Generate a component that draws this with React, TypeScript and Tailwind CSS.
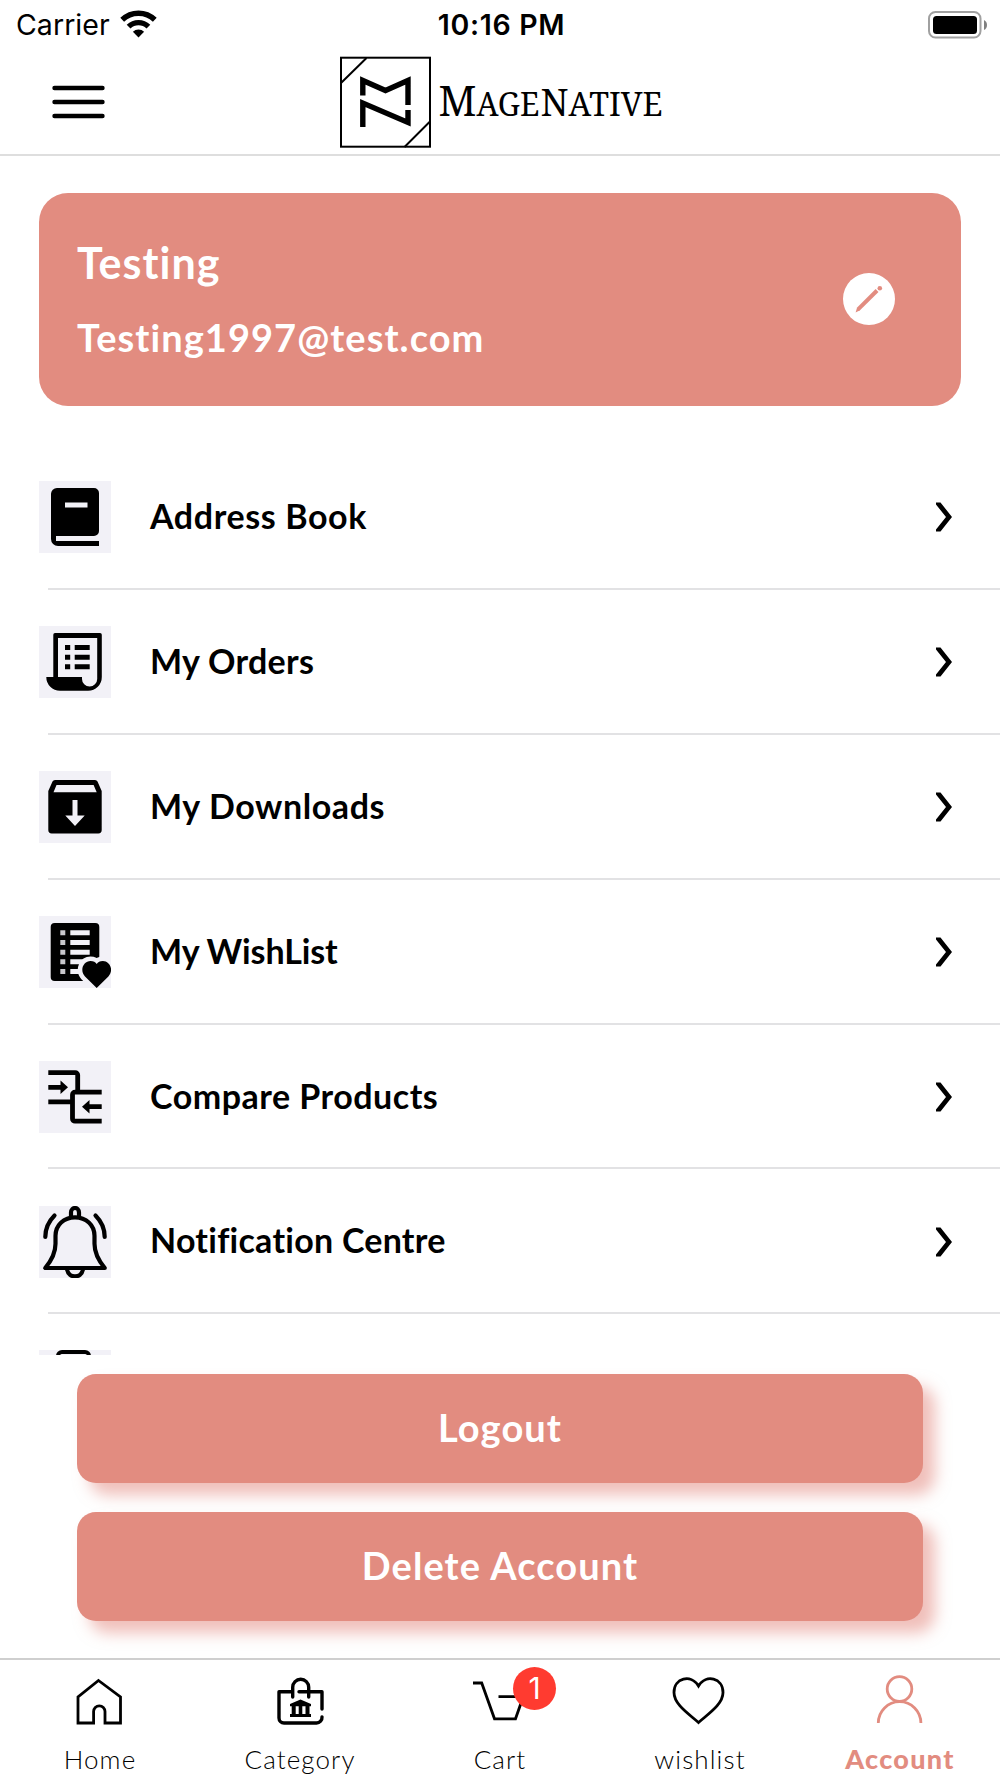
import type { ReactNode } from "react"

const menuItems = [
  { label: "Address Book", icon: BookIcon, tracking: "tracking-[0.6px]" },
  { label: "My Orders", icon: OrdersIcon, tracking: "tracking-[0.3px]" },
  { label: "My Downloads", icon: DownloadsIcon, tracking: "tracking-[0.6px]" },
  { label: "My WishList", icon: WishListIcon, tracking: "tracking-[-0.1px]" },
  { label: "Compare Products", icon: CompareIcon, tracking: "tracking-[0.5px]" },
  { label: "Notification Centre", icon: BellIcon, tracking: "tracking-[0.25px]" }
]

const tabs = [
  { label: "Home", icon: HomeIcon },
  { label: "Category", icon: CategoryIcon },
  { label: "Cart", icon: CartIcon, badge: 1 },
  { label: "wishlist", icon: HeartIcon },
  { label: "Account", icon: AccountIcon, active: true }
]

export default function App() {
  return (
    <div className="flex h-[1778px] w-[1000px] flex-col overflow-hidden bg-white font-['Lato',sans-serif] text-black">
      <StatusBar />
      <Header />

      <main className="flex flex-1 flex-col">
        <ProfileCard />

        {/* Account menu */}
        <div className="mt-[39px] h-[910px] overflow-hidden">
          {menuItems.map((item) => (
            <div key={item.label} className="flex h-[144.9px] flex-col">
              <div className="flex flex-1 items-center pl-[39px] pr-[47px] pt-[2px]">
                <IconTile>
                  <item.icon />
                </IconTile>
                <span className={`-mt-[3px] ml-[39px] flex-1 text-[34px] font-bold leading-none ${item.tracking}`}>
                  {item.label}
                </span>
                <ChevronIcon />
              </div>
              <div className="ml-12 h-[2px] bg-[#e2e2e4]" />
            </div>
          ))}
          <div className="pl-[39px] pt-[36px]">
            <IconTile>
              <rect x="19" y="2" width="31" height="60" rx="4" fill="none" stroke="currentColor" strokeWidth="4" />
            </IconTile>
          </div>
        </div>

        {/* Actions */}
        <div className="mt-[19px] flex flex-col gap-[29px] px-[77px]">
          <ActionButton>Logout</ActionButton>
          <ActionButton>Delete Account</ActionButton>
        </div>
      </main>

      <TabBar />
    </div>
  )
}

function StatusBar() {
  return (
    <div className="flex h-[50px] items-center justify-between pl-[16px] pr-[13px] font-['Inter',sans-serif] text-[28.5px] leading-none">
      <div className="flex flex-1 items-center gap-[10px]">
        <span className="tracking-[0.05px]">Carrier</span>
        <svg className="-mt-[2px] h-[28px] w-[37px]" viewBox="0 0 37 28" fill="none" stroke="currentColor" strokeWidth="5.4">
          <path d="M2.2 9.8a23.4 23.4 0 0 1 32.6 0" />
          <path d="M8.6 16.6a14.2 14.2 0 0 1 19.8 0" />
          <path d="M18.5 27.5l-5.6-5.7a8 8 0 0 1 11.200 0z" fill="currentColor" stroke="none" />
        </svg>
      </div>
      <span className="font-semibold tracking-[0.7px]">10:16 PM</span>
      <div className="flex flex-1 justify-end">
        <svg className="-mt-px h-[28px] w-[59px]" viewBox="0 0 59 28">
          <rect x="1" y="1" width="51.5" height="25.5" rx="6.5" fill="none" stroke="#a0a0a0" strokeWidth="2" />
          <rect x="5" y="5" width="44" height="18" rx="3.5" />
          <path d="M56 9q3 1.500 3 5t-3 5z" fill="#808080" />
        </svg>
      </div>
    </div>
  )
}

function Header() {
  return (
    <header className="flex h-[106px] items-center border-b-2 border-[#dedede] pl-[52px]">
      <svg className="h-[34px] w-[53px]" viewBox="0 0 53 34" stroke="currentColor" strokeWidth="4.4" strokeLinecap="round">
        <path d="M2.500 3h48M2.500 17h48M2.500 31h48" />
      </svg>
      <Logo />
    </header>
  )
}

function Logo() {
  return (
    <svg className="ml-[234px] h-[92px] w-[325px]" viewBox="0 0 325 92">
      <g fill="none" stroke="currentColor">
        <rect x="2" y="1.700" width="89" height="89" strokeWidth="2" />
        <path d="M2 27L27.500 2M65.500 91l25.500-25.500" strokeWidth="2" />
        <path d="M23.800 39.500V24.500L46.500 34.500L69 24.500V49" strokeWidth="5.400" />
        <path d="M23.800 71V47L69 66.500V54" strokeWidth="5.400" />
      </g>
      <g className="font-['Noto_Serif','Liberation_Serif',serif]" fill="currentColor">
        <text x="99.500" y="60" fontSize="41" textLength="38" lengthAdjust="spacingAndGlyphs">M</text>
        <text x="137.500" y="60" fontSize="33" textLength="63" lengthAdjust="spacingAndGlyphs">AGE</text>
        <text x="201.500" y="60" fontSize="39" textLength="28" lengthAdjust="spacingAndGlyphs">N</text>
        <text x="229.500" y="60" fontSize="33" textLength="94" lengthAdjust="spacingAndGlyphs">ATIVE</text>
      </g>
    </svg>
  )
}

function ProfileCard() {
  return (
    <section className="mx-[39px] mt-[37px] flex h-[213px] items-center justify-between rounded-[29px] bg-[#e28c80] pb-[2px] pl-[38px] pr-[66px] text-white">
      <div className="flex flex-col gap-[34px] font-bold leading-none">
        <h1 className="text-[43px] tracking-[1px]">Testing</h1>
        <p className="text-[38px] tracking-[1.05px]">Testing1997@test.com</p>
      </div>
      <button className="flex size-[52px] items-center justify-center rounded-full bg-white text-[#e28c80]">
        <svg className="size-[28px]" viewBox="0 0 28 28" fill="currentColor">
          <path d="M0.600 27.400l1.500-5L20.600 4l2.900 2.900L5 25.200z" />
          <circle cx="24.800" cy="3.300" r="2.300" />
        </svg>
      </button>
    </section>
  )
}

function ActionButton({ children }: { children: ReactNode }) {
  return (
    <button className="flex h-[109px] items-center justify-center rounded-[19px] bg-[#e28c80] pb-[3px] text-[38px] font-bold leading-none tracking-[1.1px] text-white shadow-[12px_12px_15px_rgba(226,128,118,0.5)]">
      {children}
    </button>
  )
}

function TabBar() {
  return (
    <nav className="flex h-[120px] shrink-0 border-t-2 border-[#cfcfcf] bg-white">
      {tabs.map((tab) => (
        <div
          key={tab.label}
          className={`flex flex-1 flex-col items-center pt-3 ${tab.active ? "text-[#e28c80]" : "text-black"}`}
        >
          <div className="relative size-[60px]">
            <tab.icon />
            {tab.badge && (
              <span className="absolute left-[43px] top-[-5px] flex size-[43px] items-center justify-center rounded-full bg-[#ff3b30] font-['Inter',sans-serif] text-[30px] text-white">
                {tab.badge}
              </span>
            )}
          </div>
          <span
            className={`leading-none ${tab.active ? "mt-[13px] text-[27px] font-black tracking-[1.3px]" : "mt-[14px] text-[26px] font-light tracking-[1.1px]"}`}
          >
            {tab.label}
          </span>
        </div>
      ))}
    </nav>
  )
}

// Icons
function IconTile({ children }: { children: ReactNode }) {
  return (
    <svg className="size-[72px] bg-[#f2f1f7]" viewBox="0 0 72 72" fill="currentColor">
      {children}
    </svg>
  )
}

function BookIcon() {
  return (
    <path
      fillRule="evenodd"
      d="M18 7h37a5 5 0 0 1 5 5v38a5 5 0 0 1-5 5H17v5h43v5H19a7 7 0 0 1-7-7V13a6 6 0 0 1 6-6zM26 21.500v5h22.500v-5z"
    />
  )
}

function OrdersIcon() {
  return (
    <>
      <path
        fillRule="evenodd"
        d="M16 7h45a1.800 1.800 0 0 1 1.800 1.800V51A13.700 13.700 0 0 1 49 64.800H21A13.700 13.700 0 0 1 7.300 51h7V8.800A1.800 1.800 0 0 1 16 7zM19 12v39h24v2a7.600 7.600 0 0 0 15.200 0V12z"
      />
      <path d="M26 19h5.200v5H26zM26 28.700h5.200v5H26zM26 38.300h5.200v5H26zM35.700 19h15v5h-15zM35.700 28.700h15v5h-15zM35.700 38.300h15v5h-15z" />
    </>
  )
}

function DownloadsIcon() {
  return (
    <path
      fillRule="evenodd"
      d="M16 9h40q1.800 0 2.500 1.500L62.700 20v39a3.400 3.400 0 0 1-3.400 3.400H12.700A3.400 3.400 0 0 1 9.300 59V20l4.200-9.500Q14.200 9 16 9zM17.500 14L14.500 21.300h43.200L54.600 14zM33.500 29v15.500h-7.200L36 55l9.700-10.500h-7.200V29z"
    />
  )
}

function WishListIcon() {
  return (
    <>
      <rect x="11.700" y="7" width="48.600" height="58" rx="4" />
      <g stroke="#f2f1f7" strokeWidth="5">
        <path d="M21.300 16.800h5M21.300 26.500h5M21.300 36.200h5M21.300 45.800h5M21.300 55.500h5" stroke="#c9c8cd" />
        <path d="M31.300 16.800h19.400M31.300 26.500h19.400M31.300 36.200h19.400M31.300 45.800h13M31.300 55.500h12" />
      </g>
      <path
        d="M57.700 72L46 60.500c-6-7-1-15.500 5.500-15.500 3 0 5 1.300 6.200 3 1.200-1.700 3.200-3 6.200-3 6.500 0 11.500 8.500 5.500 15.500z"
        stroke="#f2f1f7"
        strokeWidth="9"
        paintOrder="stroke"
      />
    </>
  )
}

function CompareIcon() {
  return (
    <>
      <path
        d="M9.300 11.700h27a2.400 2.400 0 0 1 2.400 2.400V31M62.700 31.200H36a2.500 2.500 0 0 0-2.500 2.500v24a2.500 2.500 0 0 0 2.500 2.500h26.700M9.300 40.800h24M9.300 26.300H23M62.700 45.700H49"
        fill="none"
        stroke="currentColor"
        strokeWidth="4.800"
      />
      <path d="M21.500 19.500l7.500 6.800-7.500 6.800zM50.500 38.900L43 45.700l7.500 6.800z" />
    </>
  )
}

function BellIcon() {
  return (
    <g fill="none" stroke="currentColor" strokeWidth="4.200" strokeLinecap="round" strokeLinejoin="round">
      <path d="M36 11.300c-11 0-19.500 7.500-19.500 18.500v8c0 10-5 18-10.300 24.200h59.600C60.500 55.800 55.500 47.800 55.500 37.800v-8c0-11-8.500-18.500-19.500-18.500z" />
      <path d="M32 10V6.500c0-6 8-6 8 0V10M28.200 64c1.500 8.500 14.100 8.500 15.600 0" />
      <path d="M15.500 9.500C9.500 15.500 6.300 22 6.300 31M56.500 9.500c6 6 9.200 12.500 9.200 21.500" />
    </g>
  )
}

function ChevronIcon() {
  return (
    <svg className="h-[30px] w-[18px]" viewBox="0 0 18 30" fill="currentColor">
      <path d="M1 .500h4.500L17 15 5.500 29.500H1v-2L11 15 1 2.500z" />
    </svg>
  )
}

function TabIcon({ children, width }: { children: ReactNode; width: string }) {
  return (
    <svg className="size-[60px]" viewBox="0 0 60 60" fill="none" stroke="currentColor" strokeWidth={width}>
      {children}
    </svg>
  )
}

function HomeIcon() {
  return (
    <TabIcon width="2.800">
      <path d="M28.500 8.500L50.500 25v26H35V39.500a5.700 5.700 0 0 0-11.400 0V51H8V25z" />
    </TabIcon>
  )
}

function CategoryIcon() {
  return (
    <TabIcon width="3.400">
      <path
        d="M22 19.700H9V46a5 5 0 0 0 5 5H46.500a5.500 5.500 0 0 0 5.500-6M29 19.700h23V37M22.700 25V15.300a8 8 0 0 1 16 0V25"
        strokeLinecap="round"
        strokeLinejoin="round"
      />
      <path d="M30.500 27.500l10.500 4.500v2.300H20V32zM20 42h21v3H20zM21.700 34h4v9h-4zM28.700 34h3.600v9h-3.600zM35.500 34h4v9h-4z" fill="currentColor" stroke="none" />
    </TabIcon>
  )
}

function CartIcon() {
  return (
    <TabIcon width="2.800">
      <path d="M3 11h8.700L24.500 46.800h21L57 14M28.500 24.700h26" />
    </TabIcon>
  )
}

function HeartIcon() {
  return (
    <TabIcon width="2.800">
      <path d="M28.500 50.500C19 42 4 32.500 4 20.500 4 6 21 1.500 28.500 14 36 1.500 53 6 53 20.500c0 12-15 21.500-24.500 30z" />
    </TabIcon>
  )
}

function AccountIcon() {
  return (
    <TabIcon width="2.800">
      <circle cx="29.500" cy="17" r="12.300" />
      <path d="M8.300 51a21.300 21.300 0 0 1 42.600 0" />
    </TabIcon>
  )
}
